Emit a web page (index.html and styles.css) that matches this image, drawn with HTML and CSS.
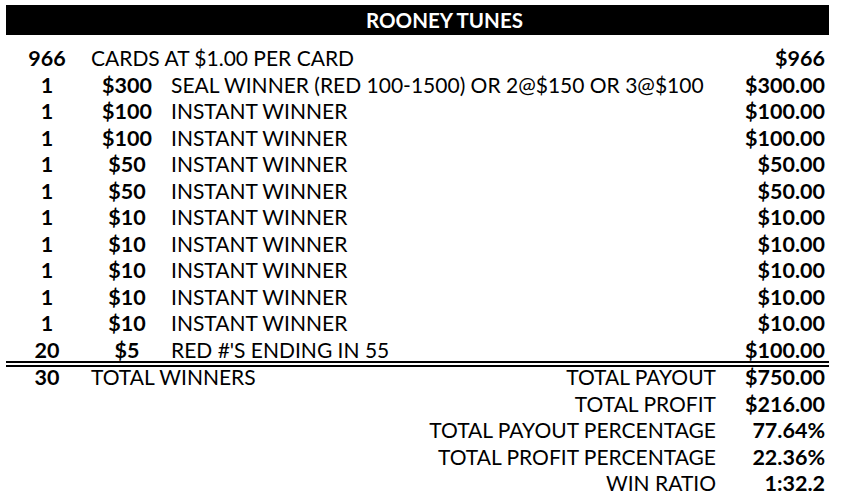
FILE: index.html
```html
<!DOCTYPE html>
<html>
<head>
<meta charset="utf-8">
<link rel="stylesheet" href="styles.css">
</head>
<body>
<div class="sheet">
  <div class="title">ROONEY TUNES</div>
  <div class="table">
    <div class="row"><div class="c1">966</div><div class="c2 wide">CARDS AT $1.00 PER CARD</div><div class="c3"></div><div class="c4">$966</div></div>
    <div class="row"><div class="c1">1</div><div class="c2">$300</div><div class="c3">SEAL WINNER (RED 100-1500) OR 2@$150 OR 3@$100</div><div class="c4">$300.00</div></div>
    <div class="row"><div class="c1">1</div><div class="c2">$100</div><div class="c3">INSTANT WINNER</div><div class="c4">$100.00</div></div>
    <div class="row"><div class="c1">1</div><div class="c2">$100</div><div class="c3">INSTANT WINNER</div><div class="c4">$100.00</div></div>
    <div class="row"><div class="c1">1</div><div class="c2">$50</div><div class="c3">INSTANT WINNER</div><div class="c4">$50.00</div></div>
    <div class="row"><div class="c1">1</div><div class="c2">$50</div><div class="c3">INSTANT WINNER</div><div class="c4">$50.00</div></div>
    <div class="row"><div class="c1">1</div><div class="c2">$10</div><div class="c3">INSTANT WINNER</div><div class="c4">$10.00</div></div>
    <div class="row"><div class="c1">1</div><div class="c2">$10</div><div class="c3">INSTANT WINNER</div><div class="c4">$10.00</div></div>
    <div class="row"><div class="c1">1</div><div class="c2">$10</div><div class="c3">INSTANT WINNER</div><div class="c4">$10.00</div></div>
    <div class="row"><div class="c1">1</div><div class="c2">$10</div><div class="c3">INSTANT WINNER</div><div class="c4">$10.00</div></div>
    <div class="row"><div class="c1">1</div><div class="c2">$10</div><div class="c3">INSTANT WINNER</div><div class="c4">$10.00</div></div>
    <div class="row"><div class="c1">20</div><div class="c2">$5</div><div class="c3">RED #'S ENDING IN 55</div><div class="c4">$100.00</div></div>
    <div class="rule"></div>
    <div class="row"><div class="c1">30</div><div class="c2 wide">TOTAL WINNERS</div><div class="c3 label">TOTAL PAYOUT</div><div class="c4">$750.00</div></div>
    <div class="row"><div class="c1"></div><div class="c2"></div><div class="c3 label">TOTAL PROFIT</div><div class="c4">$216.00</div></div>
    <div class="row"><div class="c1"></div><div class="c2"></div><div class="c3 label">TOTAL PAYOUT PERCENTAGE</div><div class="c4">77.64%</div></div>
    <div class="row"><div class="c1"></div><div class="c2"></div><div class="c3 label">TOTAL PROFIT PERCENTAGE</div><div class="c4">22.36%</div></div>
    <div class="row"><div class="c1"></div><div class="c2"></div><div class="c3 label">WIN RATIO</div><div class="c4">1:32.2</div></div>
  </div>
</div>
</body>
</html>
```
FILE: styles.css
```css
html, body {
  margin: 0;
  padding: 0;
  background: #fff;
}
body {
  font-family: Lato, "Open Sans", sans-serif;
  color: #000;
}
.sheet {
  width: 823px;
  padding: 5px 0 0 6px;
}
.title {
  background: #000;
  color: #fff;
  height: 30px;
  line-height: 30px;
  text-align: center;
  font-weight: 700;
  font-size: 20.5px;
  padding-left: 54px;
  margin-bottom: 10px;
}
.table {
  font-size: 21px;
}
.row {
  display: grid;
  grid-template-columns: 82px 78px 1fr 104px;
  height: 26.5px;
  line-height: 26.5px;
}
.c1, .c2, .c3, .c4 {
  white-space: nowrap;
}
.c1, .c2, .c4 {
  font-weight: 700;
  font-size: 21.5px;
}
.c1, .c2 {
  text-align: center;
}
.c2.wide {
  text-align: left;
  font-weight: 400;
  font-size: 21px;
  padding-left: 3px;
  overflow: visible;
}
.c3 {
  padding-left: 5px;
}
.c3.label {
  text-align: right;
  padding-right: 9px;
}
.c4 {
  text-align: right;
  padding-right: 4px;
}
.rule {
  height: 2px;
  border-top: 2px solid #000;
  border-bottom: 2px solid #000;
  margin: -2px 0 -3px;
}
```
